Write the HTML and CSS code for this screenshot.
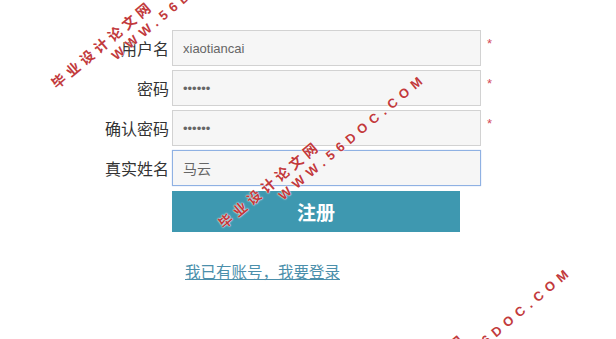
FILE: index.html
```html
<!DOCTYPE html>
<html lang="zh">
<head>
<meta charset="utf-8">
<title>注册</title>
<link rel="stylesheet" href="styles.css">
</head>
<body>
<div class="page">
  <form class="form">
    <label class="label" for="u">用户名</label>
    <input class="field" id="u" type="text" value="xiaotiancai">
    <span class="req">*</span>

    <label class="label" for="p">密码</label>
    <input class="field" id="p" type="password" value="123456">
    <span class="req">*</span>

    <label class="label" for="p2">确认密码</label>
    <input class="field" id="p2" type="password" value="123456">
    <span class="req">*</span>

    <label class="label" for="n">真实姓名</label>
    <input class="field field-focus" id="n" type="text" value="马云">
    <span class="req"></span>

    <button class="submit" type="button">注册</button>
    <a class="login" href="#">我已有账号，我要登录</a>
  </form>

  <div class="wm wm1"><div class="wm-cn">毕业设计论文网</div><div class="wm-en">WWW.56DOC.COM</div></div>
  <div class="wm wm2"><div class="wm-cn">毕业设计论文网</div><div class="wm-en">WWW.56DOC.COM</div></div>
  <div class="wm wm3"><div class="wm-cn">毕业设计论文网</div><div class="wm-en">WWW.56DOC.COM</div></div>
</div>
</body>
</html>
```
FILE: styles.css
```css
html, body {
  margin: 0;
  padding: 0;
  overflow: hidden;
  background: #fff;
}
body {
  font-family: "Liberation Sans", "Noto Sans CJK SC", sans-serif;
  width: 616px;
  height: 339px;
}
.page {
  position: relative;
  width: 616px;
  height: 339px;
  padding-top: 30px;
  box-sizing: border-box;
  overflow: hidden;
}
.form {
  display: grid;
  grid-template-columns: 172px 309px 40px;
  grid-auto-rows: 36px;
  row-gap: 4px;
}
.label {
  align-self: center;
  text-align: right;
  padding-right: 3px;
  font-size: 16px;
  color: #333;
  font-family: "Noto Sans CJK SC", sans-serif;
  line-height: 20px;
}
.field {
  box-sizing: border-box;
  width: 309px;
  height: 36px;
  margin: 0;
  padding: 0 10px;
  border: 1px solid #d2d2d2;
  background: #f6f6f6;
  font-family: "Liberation Sans", "Noto Sans CJK SC", sans-serif;
  font-size: 13px;
  color: #666;
  outline: none;
}
.field-focus {
  border-color: #8fb1e3;
  box-shadow: 0 0 1px #a9c3ea;
  font-size: 14px;
  color: #666;
}
.req {
  color: #d34a5a;
  font-size: 13px;
  padding-left: 6px;
  padding-top: 8px;
  line-height: 12px;
}
.submit {
  grid-column: 2;
  width: 288px;
  height: 41px;
  margin-top: 1px;
  border: 0;
  background: #3e98b0;
  color: #fff;
  font-family: "Noto Sans CJK SC", sans-serif;
  font-weight: bold;
  font-size: 19px;
  padding: 0;
}
.login {
  grid-column: 2;
  margin-top: 31px;
  padding-left: 13px;
  font-family: "Noto Sans CJK SC", sans-serif;
  font-size: 15.5px;
  line-height: 20px;
  color: #4b8fab;
  text-decoration: underline;
  justify-self: start;
}
.wm {
  position: absolute;
  transform: rotate(-40deg);
  transform-origin: 0 8px;
  color: #c23a3c;
  font-weight: bold;
  white-space: nowrap;
  text-shadow: 0 0 2px #fff, 0 0 1px #fff;
  pointer-events: none;
}
.wm-cn {
  font-family: "Noto Sans CJK SC", sans-serif;
  font-size: 14px;
  line-height: 16px;
  letter-spacing: 4.3px;
}
.wm-en {
  font-family: "Liberation Sans", sans-serif;
  font-size: 13px;
  line-height: 14px;
  letter-spacing: 5.5px;
  margin-left: 64px;
  margin-top: 2.5px;
}
.wm1 { left: 52.6px; top: 76.5px; }
.wm2 { left: 219.6px; top: 216.5px; }
.wm3 { left: 366px; top: 409.5px; }
```
